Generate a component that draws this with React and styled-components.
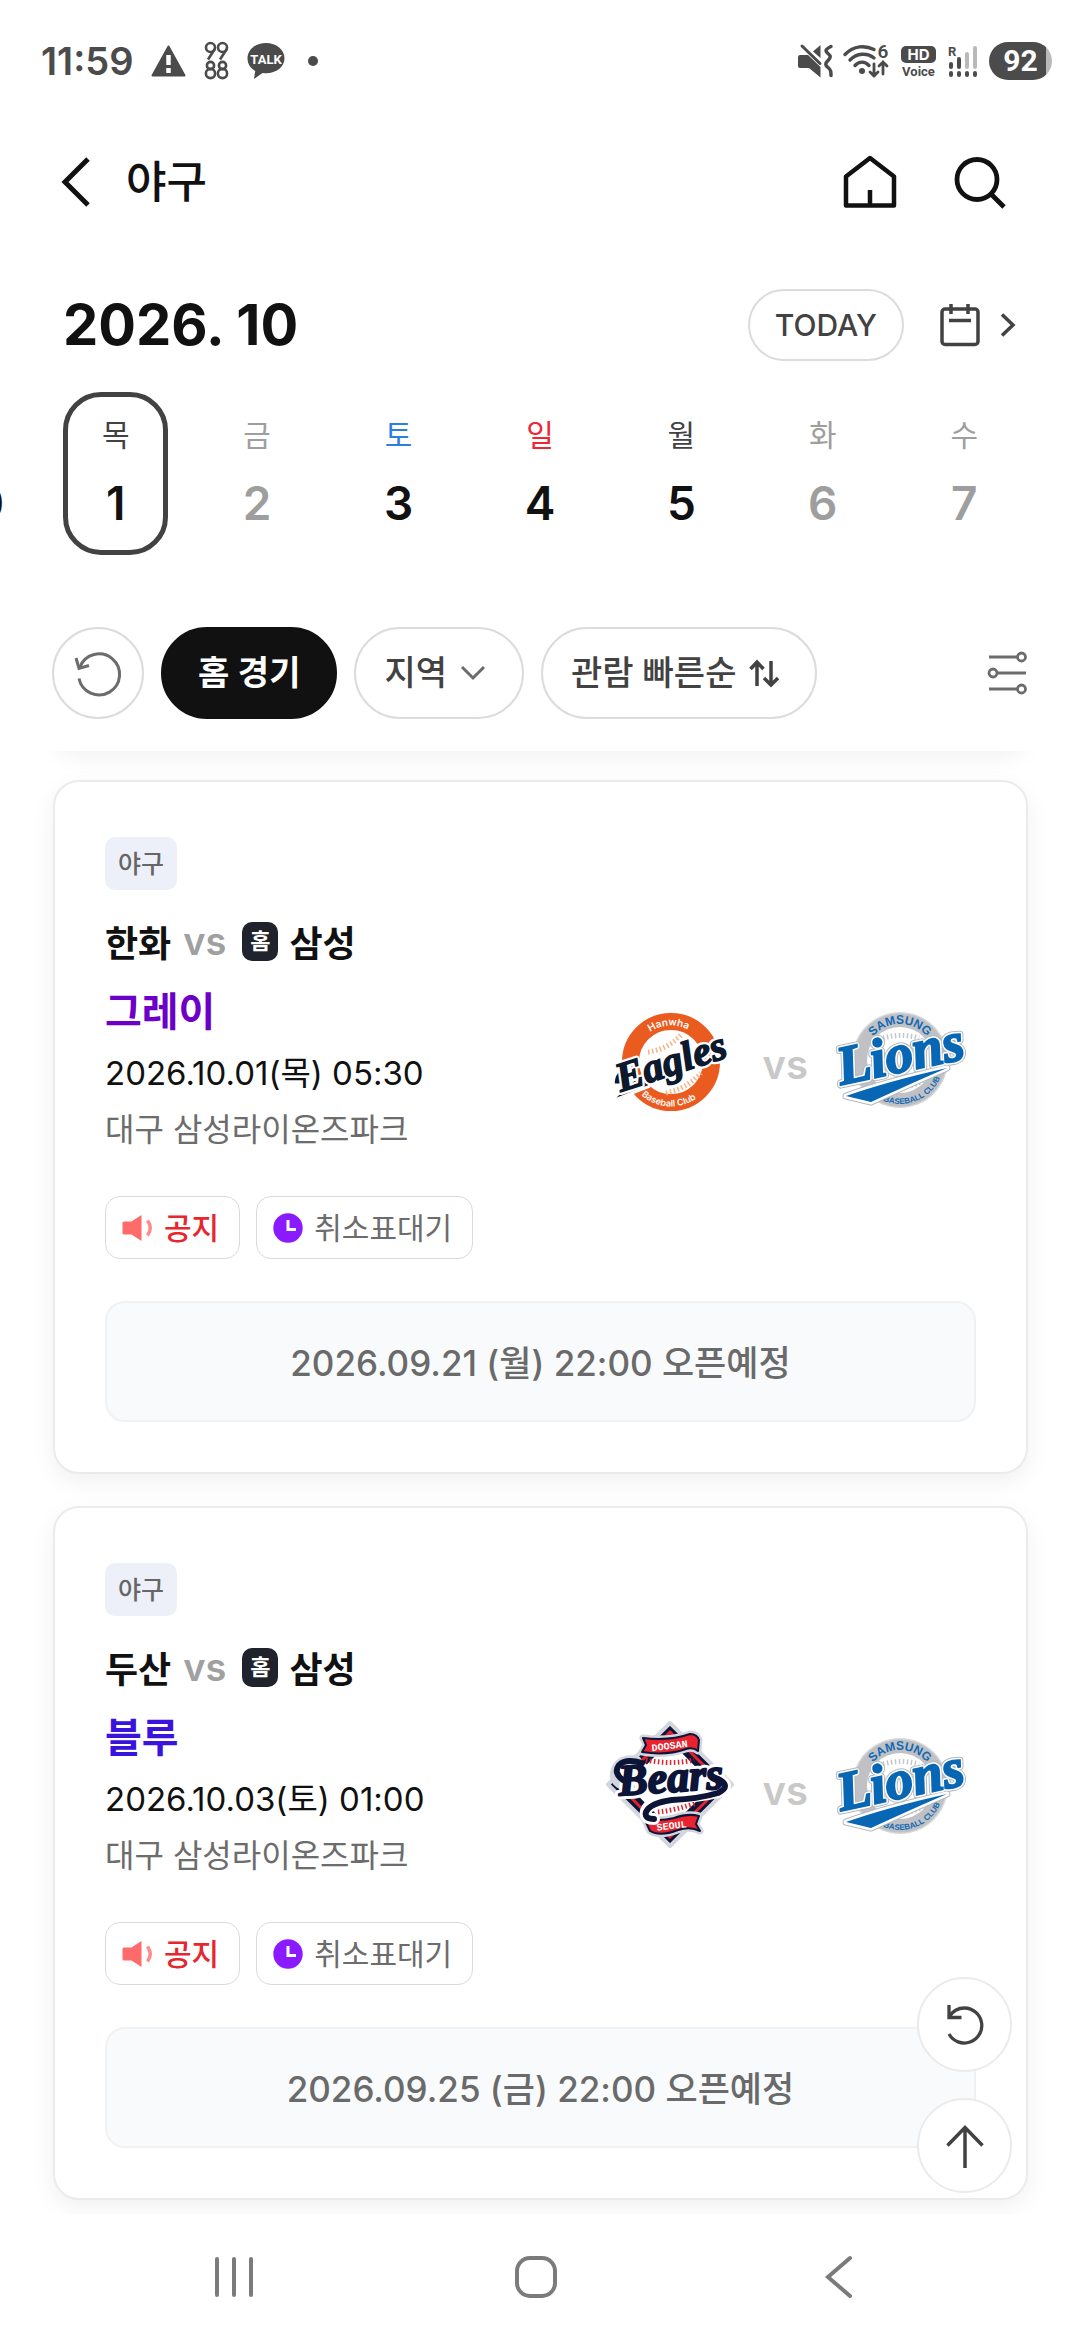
import React from 'react'
import styled, { createGlobalStyle, css } from 'styled-components'

const GlobalStyle = createGlobalStyle`
    * {
        box-sizing: border-box;
    }

    body {
        margin: 0;
        background: #fff;
        color: #111;
        font-family: Inter, 'Noto Sans CJK KR', sans-serif;
    }

    button {
        margin: 0;
        padding: 0;
        border: 0;
        background: none;
        color: inherit;
        font: inherit;
        cursor: pointer;
    }

    h1, h2, p {
        margin: 0;
    }

    svg {
        display: block;
        flex: none;
        overflow: visible;
    }
`

const Page = styled.div`
    display: flex;
    flex-direction: column;
    min-height: 100vh;
    overflow: hidden;
`

/* status bar */

const StatusBar = styled.div`
    display: flex;
    justify-content: space-between;
    align-items: center;
    height: 122px;
    padding: 0 28px 0 41px;
    color: #4b4b4b;
`

const StatusGroup = styled.div`
    display: flex;
    align-items: center;
    gap: ${({ $gap }) => $gap}px;
`

const Clock = styled.span`
    font-size: 38px;
    font-weight: 600;
    line-height: 40px;
`

const Dot = styled.span`
    width: 10px;
    height: 10px;
    margin-left: 5px;
    border-radius: 50%;
    background: currentColor;
`

const Battery = styled.span`
    width: 63px;
    height: 38px;
    border-radius: 19px;
    background: linear-gradient(90deg, #4b4b4b 91%, #b9b9b9 91%);
    color: #fff;
    font-family: Roboto, sans-serif;
    font-size: 30px;
    font-weight: 700;
    line-height: 38px;
    text-align: center;
`

/* header */

const Header = styled.header`
    display: flex;
    align-items: center;
    height: 120px;
    padding: 0 73px 0 61px;
`

const IconButton = styled.button`
    display: flex;
    align-items: center;
    gap: 20px;
`

const Title = styled.h1`
    flex: 1;
    padding-left: 35px;
    font-size: 44px;
    font-weight: 500;
    line-height: 60px;
`

const HeaderActions = styled.div`
    display: flex;
    align-items: center;
    gap: 56px;
`

/* calendar */

const MonthRow = styled.section`
    display: flex;
    align-items: center;
    height: 72px;
    margin-top: 47px;
    padding: 0 64px 0 63px;
`

const Month = styled.h2`
    flex: 1;
    font-size: 56px;
    font-weight: 700;
    line-height: 72px;
`

const TodayButton = styled.button`
    height: 72px;
    margin-right: 36px;
    padding: 0 25px;
    border: 2px solid #dcdcdc;
    border-radius: 36px;
    color: #424242;
    font-size: 30px;
    font-weight: 500;
`

const Days = styled.div`
    display: flex;
    margin-top: 31px;
    padding: 0 45px 0 45px;
    overflow: hidden;
`

const tones = {
    normal: '#424242',
    off: '#9e9e9e',
    sat: '#2f7de1',
    sun: '#ee2737',
}

const Day = styled.button`
    display: flex;
    flex: 0 0 calc(100% / 7);
    justify-content: center;
    color: ${({ $tone }) => ($tone === 'off' ? '#9e9e9e' : '#111')};

    /* the strip is scrolled one day in */
    &:first-child {
        margin-left: calc(100% / -7);
    }
`

const DayBox = styled.span`
    display: flex;
    flex-direction: column;
    align-items: center;
    width: 105px;
    height: 163px;
    padding-top: 16px;
    border: 5px solid ${({ $selected }) => ($selected ? '#424242' : 'transparent')};
    border-radius: 38px;
`

const Weekday = styled.span`
    height: 44px;
    color: ${({ $tone }) => tones[$tone]};
    font-size: 30px;
    line-height: 44px;
`

const DayNumber = styled.span`
    margin-top: 16px;
    font-size: 46px;
    font-weight: 600;
    line-height: 60px;
`

/* filters */

const Filters = styled.div`
    display: flex;
    align-items: center;
    gap: 17px;
    margin-top: 72px;
    padding: 0 52px 32px;
`

const Chip = styled.button`
    display: flex;
    align-items: center;
    justify-content: center;
    gap: 13px;
    height: 92px;
    padding: 0 36px 0 28px;
    border: 2px solid #dcdcdc;
    border-radius: 46px;
    color: #424242;
    font-size: 34px;
    font-weight: 500;
    line-height: 50px;

    ${({ $round }) => $round && css`
        width: 92px;
        padding: 0;
    `}

    ${({ $active }) => $active && css`
        padding: 0 35px;
        border-color: #111;
        background: #111;
        color: #fff;
        font-weight: 600;
    `}
`

const FilterMenu = styled(IconButton)`
    margin-left: auto;
`

/* match list */

const List = styled.main`
    position: relative;
    display: flex;
    flex-direction: column;
    gap: 32px;
    padding: 29px 52px 14px 53px;
    overflow: hidden;
`

const cardShadow = css`
    box-shadow: 0 8px 24px rgba(0, 0, 0, 0.06);
`

/* lower edge of the card scrolled out above */
const PassedCard = styled.div`
    height: 60px;
    margin-top: -92px;
    border-radius: 26px;
    ${cardShadow}
`

const Card = styled.article`
    padding: 55px 50px 50px;
    border: 2px solid #ebebeb;
    border-radius: 26px;
    background: #fff;
    ${cardShadow}
`

const Sport = styled.span`
    display: flex;
    align-items: center;
    justify-content: center;
    width: 72px;
    height: 53px;
    border-radius: 10px;
    background: #edf0f8;
    color: #666;
    font-size: 25px;
    font-weight: 500;
    line-height: 36px;
`

const Summary = styled.div`
    display: flex;
    align-items: flex-end;
    justify-content: space-between;
    margin-top: 17px;
`

const Line = styled.p`
    display: flex;
    align-items: center;
    height: ${({ $tall }) => ($tall ? 68 : 56)}px;
    color: ${({ $color }) => $color || '#111'};
    font-size: ${({ $size }) => $size}px;
    font-weight: ${({ $weight }) => $weight || 400};
    white-space: nowrap;
`

const Vs = styled.span`
    padding: 0 16px 0 12px;
    color: #a0a0a0;
    font-size: 38px;
    font-weight: 600;
`

const HomeMark = styled.span`
    display: flex;
    align-items: center;
    justify-content: center;
    width: 36px;
    height: 39px;
    margin-right: 11px;
    border-radius: 10px;
    background: #20232c;
    color: #fff;
    font-size: 22px;
    font-weight: 700;
    line-height: 32px;
`

const Teams = styled.div`
    display: flex;
    align-items: center;
    gap: 29px;
    margin-bottom: 32px;
    padding-right: 11px;
`

const TeamsVs = styled.span`
    padding-top: 12px;
    color: #c8c8c8;
    font-size: 40px;
    font-weight: 600;
    line-height: 48px;
`

const Tags = styled.div`
    display: flex;
    gap: 16px;
    margin-top: 41px;
`

const Tag = styled.button`
    display: flex;
    align-items: center;
    gap: 11px;
    height: 63px;
    padding: 0 20px 0 16px;
    border: 1px solid #dadada;
    border-radius: 15px;
    color: ${({ $color }) => $color};
    font-size: 30px;
    font-weight: ${({ $weight }) => $weight};
    line-height: 44px;
`

const OpenTime = styled.p`
    display: flex;
    align-items: center;
    justify-content: center;
    height: 121px;
    margin-top: 42px;
    padding-bottom: 3px;
    border: 2px solid #eff1f3;
    border-radius: 20px;
    background: #f9fafc;
    color: #6a6a6a;
    font-size: 35px;
    font-weight: 500;
`

/* floating buttons */

const Floating = styled.div`
    position: absolute;
    right: 68px;
    bottom: 21px;
    display: flex;
    flex-direction: column;
    gap: 26px;
`

const FloatingButton = styled.button`
    display: flex;
    align-items: center;
    justify-content: center;
    width: 95px;
    height: 95px;
    border: 2px solid #ebebeb;
    border-radius: 50%;
    background: #fff;
`

/* system navigation */

const SystemNav = styled.nav`
    display: grid;
    grid-template-columns: repeat(3, 1fr);
    align-items: center;
    justify-items: center;
    height: 126px;
    margin-top: auto;
    padding: 0 90px 0 83px;
`

const AlertIcon = () => (
    <svg width="35" height="32" viewBox="0 0 35 32" aria-hidden="true">
        <path d="M17.5 1.5 33.5 30.5H1.500z" fill="#4b4b4b" stroke="#4b4b4b" strokeWidth="2" strokeLinejoin="round" />
        <path d="M17.500 10v10M17.500 23v5" stroke="#fff" strokeWidth="4.500" />
    </svg>
)

const NumbersIcon = () => (
    <svg width="25" height="38" viewBox="0 0 25 38" fill="none" stroke="#4b4b4b" strokeWidth="2.600" aria-hidden="true">
        <path d="M10.800 7 4 17.500M22.800 7 16 17.500" />
        <circle cx="6.500" cy="5.500" r="4.500" />
        <circle cx="18.500" cy="5.500" r="4.500" />
        <circle cx="6.500" cy="23.500" r="3.600" />
        <circle cx="18.500" cy="23.500" r="3.600" />
        <circle cx="6.500" cy="31.500" r="4.600" />
        <circle cx="18.500" cy="31.500" r="4.600" />
    </svg>
)

const TalkIcon = () => (
    <svg width="38" height="37" viewBox="0 0 38 37" aria-hidden="true">
        <path d="M19 0C8.500 0 .5 6.700 .5 15.300c0 5.500 3 10 7.700 12.700L7 36l8.500-6c1.200.2 2.300.3 3.500.3 10.500 0 18.500-6.400 18.500-15S29.500 0 19 0z" fill="#4b4b4b" />
        <text x="19" y="20.500" fill="#fff" fontFamily="Roboto" fontSize="13" fontWeight="700" textAnchor="middle">TALK</text>
    </svg>
)

const MuteIcon = () => (
    <svg width="35" height="34" viewBox="0 0 35 34" aria-hidden="true">
        <path d="M2 11h8l12.500 12v10.500L11 24H2q-2 0-2-2v-9q0-2 2-2zM22.500 1v13L15 7.500z" fill="#4b4b4b" />
        <path d="M4 2l18 17.500" stroke="#4b4b4b" strokeWidth="3" strokeLinecap="round" />
        <path d="M33 2.500c-6 3-6 4.500-3 7s3 4 0 7-3 4.500 0 7 3 4 3 8" fill="none" stroke="#4b4b4b" strokeWidth="3.500" strokeLinecap="round" />
    </svg>
)

const WifiIcon = () => (
    <svg width="48" height="34" viewBox="0 0 48 34" fill="none" stroke="#4b4b4b" strokeWidth="3.400" strokeLinecap="round" aria-hidden="true">
        <path d="M2 10.500C11 1.500 22 1 31 5.500M7 16c7-7 17-7.500 24-2M12 21.500c4-4.500 10-4.500 14 0" />
        <circle cx="19" cy="27" r="3" fill="#4b4b4b" stroke="none" />
        <path d="M31 20v12M27 28l4 4 4-4M40 30V18M36 22l4-4 4 4" strokeWidth="2.800" />
        <text x="40" y="14" fill="#4b4b4b" stroke="none" fontFamily="Roboto" fontSize="19" fontWeight="600" textAnchor="middle">6</text>
    </svg>
)

const HdVoiceIcon = () => (
    <svg width="37" height="34" viewBox="0 0 37 34" aria-hidden="true">
        <rect x="0" y="2" width="35" height="17" rx="5" fill="#4b4b4b" />
        <text x="17.500" y="16" fill="#fff" fontFamily="Inter" fontSize="15" fontWeight="700" textAnchor="middle">HD</text>
        <text x="17.500" y="32" fill="#4b4b4b" fontFamily="Roboto" fontSize="13" fontWeight="700" textAnchor="middle">Voice</text>
    </svg>
)

const SignalIcon = () => (
    <svg width="31" height="34" viewBox="0 0 31 34" fill="none" strokeWidth="4" strokeLinecap="round" aria-hidden="true">
        <path d="M3 20v3M11 15v8M3 29v2M11 29v2M19 29v2M27 29v2" stroke="#4b4b4b" />
        <path d="M19 10v13M27 4v19" stroke="#b9b9b9" />
        <text x="0" y="12" fill="#4b4b4b" fontFamily="Roboto" fontSize="13" fontWeight="700">R</text>
    </svg>
)

const BackIcon = () => (
    <svg width="30" height="50" viewBox="0 0 30 50" fill="none" stroke="#111" strokeWidth="5" aria-hidden="true">
        <path d="M27 2 4 25l23 23" />
    </svg>
)

const HomeIcon = () => (
    <svg width="54" height="54" viewBox="0 0 54 54" fill="none" stroke="#111" strokeWidth="4.500" strokeLinejoin="round" aria-hidden="true">
        <path d="M3 21.500 27 3l24 18.500v29H3zM27 50V35" />
    </svg>
)

const SearchIcon = () => (
    <svg width="54" height="54" viewBox="0 0 54 54" fill="none" stroke="#111" strokeWidth="4.800" aria-hidden="true">
        <circle cx="24" cy="24.500" r="20" />
        <path d="M38 39l13 13" />
    </svg>
)

const CalendarIcon = () => (
    <svg width="40" height="44" viewBox="0 0 40 44" fill="none" stroke="#424242" strokeWidth="3.500" aria-hidden="true">
        <rect x="2" y="6" width="36" height="35.500" rx="3" />
        <path d="M11 1v10M28 1v10M9 17.500h22" />
    </svg>
)

const NextIcon = () => (
    <svg width="16" height="26" viewBox="0 0 16 26" fill="none" stroke="#424242" strokeWidth="3.500" aria-hidden="true">
        <path d="M2 2.500 13 13 2 23.500" />
    </svg>
)

const ResetIcon = () => (
    <svg width="48" height="48" viewBox="0 0 48 48" fill="none" stroke="#6c6c6c" strokeWidth="3" aria-hidden="true">
        <path d="M6 18A20.500 20.500 0 1 1 5 29.500" />
        <path d="M2 9l3 10.500 10-3" />
    </svg>
)

const DownIcon = () => (
    <svg width="26" height="16" viewBox="0 0 26 16" fill="none" stroke="#6c6c6c" strokeWidth="3" aria-hidden="true">
        <path d="M2 2l11 11L24 2" />
    </svg>
)

const SortIcon = () => (
    <svg width="30" height="30" viewBox="0 0 30 30" fill="none" stroke="#424242" strokeWidth="3.500" aria-hidden="true">
        <path d="M8 28V4M1.500 11 8 4l6.500 7M22 3v24M15 20l7 7 7-7" />
    </svg>
)

const SlidersIcon = () => (
    <svg width="41" height="44" viewBox="0 0 41 44" fill="none" stroke="#6c6c6c" strokeWidth="2.800" aria-hidden="true">
        <path d="M2 6h28M11 22h28M2 38h28" />
        <circle cx="34.500" cy="6" r="4" />
        <circle cx="6" cy="22" r="4" />
        <circle cx="34.500" cy="38" r="4" />
    </svg>
)

const SpeakerIcon = () => (
    <svg width="31" height="28" viewBox="0 0 31 28" aria-hidden="true">
        <path d="M2 7.500h7.500L19.500 1v26L9.500 20.500H2q-1.500 0-1.500-1.500V9q0-1.500 1.500-1.500z" fill="#ff6b6b" />
        <path d="M25.500 6.500q5.500 7.500 0 15" fill="none" stroke="#ff8a8a" strokeWidth="3.500" />
    </svg>
)

const ClockIcon = () => (
    <svg width="30" height="30" viewBox="0 0 30 30" aria-hidden="true">
        <circle cx="15" cy="15" r="14.700" fill="#8a1aff" />
        <path d="M15 7v9.500h8" fill="none" stroke="#fff" strokeWidth="3" />
    </svg>
)

const ReloadIcon = () => (
    <svg width="40" height="44" viewBox="0 0 40 44" fill="none" stroke="#424242" strokeWidth="3.300" aria-hidden="true">
        <path d="M4 14C8 7.500 13 5 19.500 5a17.500 17.500 0 1 1-15.500 26" />
        <path d="M4 2v12.500h12.500" />
    </svg>
)

const UpIcon = () => (
    <svg width="40" height="44" viewBox="0 0 40 44" fill="none" stroke="#424242" strokeWidth="3.500" aria-hidden="true">
        <path d="M20 44V4M2.500 21.500 20 3.500l17.500 18" />
    </svg>
)

const EaglesLogo = () => (
    <svg width="128" height="128" viewBox="0 0 128 128" role="img" aria-label="Hanwha Eagles">
        <defs>
            <path id="eaglesTop" d="M28.500 67a36.500 36.500 0 0 1 73 0" />
            <path id="eaglesBottom" d="M20.500 67a44.500 44.500 0 0 0 89 0" />
        </defs>
        <circle cx="65" cy="67" r="40.500" fill="#fff" stroke="#ea5b20" strokeWidth="17" />
        <path d="M42 57q20-3 33-17M60 98q20-4 35-20" fill="none" stroke="#f6b184" strokeWidth="5" strokeDasharray="1.500 2.500" />
        <g fill="#fff" fontFamily="Inter" fontWeight="600" textAnchor="middle">
            <text fontSize="10"><textPath href="#eaglesTop" startOffset="48%">Hanwha</textPath></text>
            <text fontSize="9"><textPath href="#eaglesBottom" startOffset="48%">Baseball Club</textPath></text>
        </g>
        <g transform="rotate(-18 65 67)" stroke="#fff" strokeWidth="6" paintOrder="stroke" fill="#0d1a2d" strokeLinejoin="round">
            <path d="M5 70Q8 59 23 57L22 62Q13 64 11 72z" />
            <path d="M2 84 24 74 38 78 36 82 18 83z" />
            <text x="8" y="80" fontFamily="Liberation Serif" fontSize="41" fontWeight="700" fontStyle="italic">Eagles</text>
        </g>
        <text x="8" y="80" transform="rotate(-18 65 67)" fill="#0d1a2d" stroke="#0d1a2d" strokeWidth="1.500" fontFamily="Liberation Serif" fontSize="41" fontWeight="700" fontStyle="italic" aria-hidden="true">Eagles</text>
    </svg>
)

const BearsLogo = () => (
    <svg width="128" height="128" viewBox="0 0 128 128" role="img" aria-label="Doosan Bears">
        <path d="M64 2 126 63.500 64 125 2 63.500z" fill="#0c1438" stroke="#d4d6de" strokeWidth="4" strokeLinejoin="round" />
        <path d="M64 11 117 63.500 64 116 12 63.500z" fill="none" stroke="#e2232e" strokeWidth="3" />
        <path d="M64 20 107 63.500 64 107 21 63.500z" fill="#fff" />
        <path d="M40 39q24 5 48 0M52 91q18-2 38-9" fill="none" stroke="#e2232e" strokeWidth="5" strokeDasharray="1.500 2.500" />
        <g fill="#e8232f" stroke="#d4d6de" strokeWidth="7" paintOrder="stroke" strokeLinejoin="round">
            <path d="M37 17Q64 20 84 13 91 13 93 19L92 30Q87 26 80 28 60 35 36 31L40 24z" />
            <path d="M38 97Q52 101 68 97 82 92 93 95L90 103 94 110Q84 105 72 109 54 116 44 110z" />
        </g>
        <g fill="#e8232f" stroke="#0c1438" strokeWidth="2" strokeLinejoin="round">
            <path d="M37 17Q64 20 84 13 91 13 93 19L92 30Q87 26 80 28 60 35 36 31L40 24z" />
            <path d="M38 97Q52 101 68 97 82 92 93 95L90 103 94 110Q84 105 72 109 54 116 44 110z" />
        </g>
        <g fill="#fff" fontFamily="Liberation Mono" fontSize="10" fontWeight="700" textAnchor="middle">
            <text x="64" y="28" transform="rotate(-7 64 28)">DOOSAN</text>
            <text x="66" y="108" transform="rotate(-7 66 108)">SEOUL</text>
        </g>
        <g fill="none" strokeLinecap="round" strokeLinejoin="round">
            <path d="M112 58Q126 65 112 71 92 76 66 76 44 80 40 90 38 98 48 98" stroke="#fff" strokeWidth="12" />
            <path d="M24 66Q6 62 10 50 14 38 30 40" stroke="#d4d6de" strokeWidth="11" />
            <text x="13" y="71" fill="#0c1438" stroke="#fff" strokeWidth="8" paintOrder="stroke" fontFamily="Liberation Serif" fontSize="44" fontWeight="700" fontStyle="italic" transform="rotate(-4 64 70)">Bears</text>
            <text x="13" y="71" fill="#0c1438" stroke="#0c1438" strokeWidth="2" fontFamily="Liberation Serif" fontSize="44" fontWeight="700" fontStyle="italic" transform="rotate(-4 64 70)" aria-hidden="true">Bears</text>
            <path d="M112 58Q126 65 112 72 92 78 66 79 44 82 40 91 38 98 48 98" stroke="#0c1438" strokeWidth="6" />
            <path d="M17 59Q7 52 13 44 20 37 36 42" stroke="#0c1438" strokeWidth="6" />
        </g>
    </svg>
)

const LionsLogo = () => (
    <svg width="128" height="128" viewBox="0 0 128 128" role="img" aria-label="Samsung Lions">
        <defs>
            <path id="lionsTop" d="M27 65a36 36 0 0 1 72 0" />
            <path id="lionsBottom" d="M19 65a44 44 0 0 0 88 0" />
        </defs>
        <circle cx="63" cy="65" r="48" fill="#d6d8da" />
        <circle cx="63" cy="65" r="46.500" fill="#bfc1c4" />
        <circle cx="63" cy="65" r="33" fill="#fff" />
        <path d="M46 43q18-5 36 0M66 92q12-1 22-8" fill="none" stroke="#c3c5c8" strokeWidth="5" strokeDasharray="1.500 2.500" />
        <g fill="#1269b4" fontFamily="Liberation Sans" fontWeight="700" textAnchor="middle">
            <text fontSize="12"><textPath href="#lionsTop" startOffset="50%">SAMSUNG</textPath></text>
            <text fontSize="8"><textPath href="#lionsBottom" startOffset="62%">BASEBALL CLUB</textPath></text>
        </g>
        <g stroke="#b4b8bd" strokeWidth="7" fill="#b4b8bd" strokeLinejoin="round">
            <path d="M9 101Q52 86 110 73 84 84 34 107z" />
            <text x="4" y="90" fontFamily="Liberation Serif" fontSize="55" fontWeight="700" fontStyle="italic" transform="rotate(-12 4 90)">Lions</text>
        </g>
        <g stroke="#fff" strokeWidth="5" paintOrder="stroke" fill="#0767b5" strokeLinejoin="round">
            <text x="4" y="90" fontFamily="Liberation Serif" fontSize="55" fontWeight="700" fontStyle="italic" transform="rotate(-12 4 90)">Lions</text>
            <path d="M9 101Q52 86 110 73 84 84 34 107z" />
        </g>
        <text x="4" y="90" fill="#0767b5" stroke="#0767b5" strokeWidth="2" fontFamily="Liberation Serif" fontSize="55" fontWeight="700" fontStyle="italic" transform="rotate(-12 4 90)" aria-hidden="true">Lions</text>
    </svg>
)

const days = [
    { weekday: '수', date: 30, tone: 'normal' },
    { weekday: '목', date: 1, tone: 'normal', selected: true },
    { weekday: '금', date: 2, tone: 'off' },
    { weekday: '토', date: 3, tone: 'sat' },
    { weekday: '일', date: 4, tone: 'sun' },
    { weekday: '월', date: 5, tone: 'normal' },
    { weekday: '화', date: 6, tone: 'off' },
    { weekday: '수', date: 7, tone: 'off' },
]

const matches = [
    {
        away: '한화',
        home: '삼성',
        grade: '그레이',
        gradeColor: '#6c00c8',
        date: '2026.10.01(목) 05:30',
        place: '대구 삼성라이온즈파크',
        open: '2026.09.21 (월) 22:00 오픈예정',
        AwayLogo: EaglesLogo,
    },
    {
        away: '두산',
        home: '삼성',
        grade: '블루',
        gradeColor: '#3a14dc',
        date: '2026.10.03(토) 01:00',
        place: '대구 삼성라이온즈파크',
        open: '2026.09.25 (금) 22:00 오픈예정',
        AwayLogo: BearsLogo,
    },
]

const MatchCard = ({ match }) => {
    const { AwayLogo } = match

    return (
        <Card>
            <Sport>야구</Sport>
            <Summary>
                <div>
                    <Line $tall $size={36} $weight={600}>
                        {match.away}
                        <Vs>vs</Vs>
                        <HomeMark>홈</HomeMark>
                        {match.home}
                    </Line>
                    <Line $tall $size={40} $weight={600} $color={match.gradeColor}>{match.grade}</Line>
                    <Line $size={33}>{match.date}</Line>
                    <Line $size={32} $color="#6c6c6c">{match.place}</Line>
                </div>
                <Teams>
                    <AwayLogo />
                    <TeamsVs>vs</TeamsVs>
                    <LionsLogo />
                </Teams>
            </Summary>
            <Tags>
                <Tag $color="#e8262d" $weight={500}><SpeakerIcon />공지</Tag>
                <Tag $color="#6c6c6c" $weight={400}><ClockIcon />취소표대기</Tag>
            </Tags>
            <OpenTime>{match.open}</OpenTime>
        </Card>
    )
}

const App = () => {
    return (
        <Page>
            <GlobalStyle />
            <StatusBar>
                <StatusGroup $gap={18}>
                    <Clock>11:59</Clock>
                    <AlertIcon />
                    <NumbersIcon />
                    <TalkIcon />
                    <Dot />
                </StatusGroup>
                <StatusGroup $gap={10}>
                    <MuteIcon />
                    <WifiIcon />
                    <HdVoiceIcon />
                    <SignalIcon />
                    <Battery>92</Battery>
                </StatusGroup>
            </StatusBar>

            <Header>
                <IconButton aria-label="뒤로"><BackIcon /></IconButton>
                <Title>야구</Title>
                <HeaderActions>
                    <IconButton aria-label="홈"><HomeIcon /></IconButton>
                    <IconButton aria-label="검색"><SearchIcon /></IconButton>
                </HeaderActions>
            </Header>

            <MonthRow>
                <Month>2026. 10</Month>
                <TodayButton>TODAY</TodayButton>
                <IconButton aria-label="달력"><CalendarIcon /><NextIcon /></IconButton>
            </MonthRow>

            <Days>
                {days.map((day) => (
                    <Day key={day.date} $tone={day.tone}>
                        <DayBox $selected={day.selected}>
                            <Weekday $tone={day.tone}>{day.weekday}</Weekday>
                            <DayNumber>{day.date}</DayNumber>
                        </DayBox>
                    </Day>
                ))}
            </Days>

            <Filters>
                <Chip $round aria-label="초기화"><ResetIcon /></Chip>
                <Chip $active>홈 경기</Chip>
                <Chip>지역<DownIcon /></Chip>
                <Chip>관람 빠른순<SortIcon /></Chip>
                <FilterMenu aria-label="필터"><SlidersIcon /></FilterMenu>
            </Filters>

            <List>
                <PassedCard />
                {matches.map((match) => (
                    <MatchCard key={match.date} match={match} />
                ))}
                <Floating>
                    <FloatingButton aria-label="새로고침"><ReloadIcon /></FloatingButton>
                    <FloatingButton aria-label="맨 위로"><UpIcon /></FloatingButton>
                </Floating>
            </List>

            <SystemNav>
                <IconButton aria-label="최근 앱">
                    <svg width="40" height="42" viewBox="0 0 40 42" stroke="#7b7b7b" strokeWidth="4" strokeLinecap="round" aria-hidden="true">
                        <path d="M3 3v36M20 3v36M37 3v36" />
                    </svg>
                </IconButton>
                <IconButton aria-label="홈 화면">
                    <svg width="44" height="44" viewBox="0 0 44 44" fill="none" stroke="#7b7b7b" strokeWidth="4" aria-hidden="true">
                        <rect x="3" y="3" width="38" height="38" rx="13" />
                    </svg>
                </IconButton>
                <IconButton aria-label="이전">
                    <svg width="28" height="44" viewBox="0 0 28 44" fill="none" stroke="#7b7b7b" strokeWidth="4" strokeLinecap="round" aria-hidden="true">
                        <path d="M25 3 3 22l22 19" />
                    </svg>
                </IconButton>
            </SystemNav>
        </Page>
    )
}

export default App
